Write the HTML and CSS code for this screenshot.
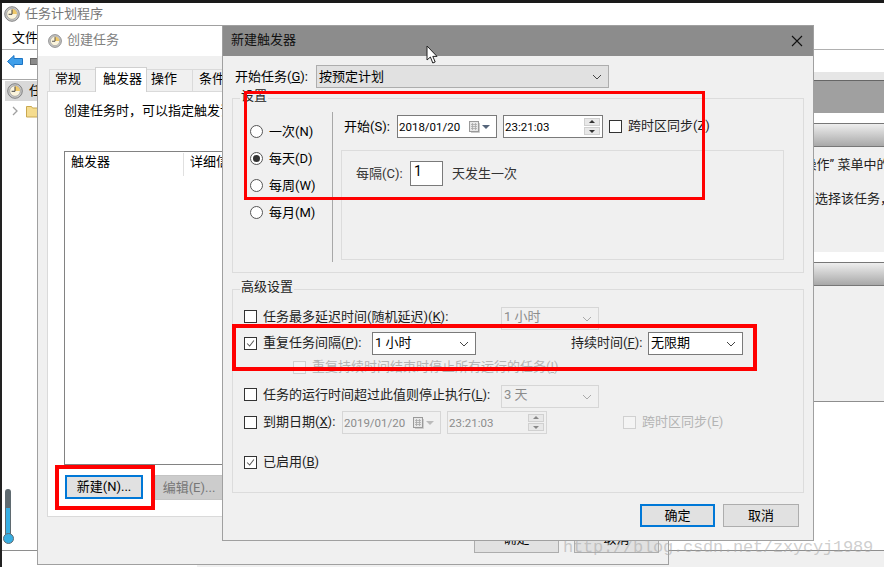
FILE: index.html
```html
<!DOCTYPE html>
<html lang="zh-CN">
<head>
<meta charset="utf-8">
<title>新建触发器</title>
<link rel="stylesheet" href="styles.css">
</head>
<body>
<svg class="defs" width="0" height="0" aria-hidden="true">
  <symbol id="clock" viewBox="0 0 16 16">
    <circle cx="8" cy="8" r="7.3" fill="#c9c9c9" stroke="#777" stroke-width="0.9"/>
    <circle cx="8" cy="8" r="5.3" fill="#fbf4dc" stroke="#8a8a8a" stroke-width="0.6"/>
    <path d="M8 8V3a5 5 0 0 1 5 5z" fill="#f0c96a"/>
    <path d="M8 3.6V8.3H4.6" fill="none" stroke="#444" stroke-width="1"/>
  </symbol>
  <symbol id="chev" viewBox="0 0 10 6">
    <path d="M1 1l4 4 4-4" fill="none" stroke="currentColor" stroke-width="1"/>
  </symbol>
  <symbol id="tick" viewBox="0 0 13 13">
    <path d="M2.5 6.5l3 3 5-6.5" fill="none" stroke="#555" stroke-width="1.2"/>
  </symbol>
  <symbol id="cal" viewBox="0 0 11 12">
    <rect x="0.5" y="0.5" width="9" height="10" fill="#e8e8e8" stroke="#9a9a9a"/>
    <path d="M2 3.5h6M2 5.5h6M2 7.5h6M3.5 2v7M6.5 2v7" stroke="#a8a8a8" stroke-width="0.8"/>
    <path d="M10.5 2v9.5H2" fill="none" stroke="#ccc"/>
  </symbol>
</svg>

<div class="screen">
  <div class="topbar"></div>
  <div class="desk">
    <div class="edge"></div>
    <div class="main">
      <div class="main-title"><svg class="ico16"><use href="#clock"/></svg><span>任务计划程序</span></div>
      <div class="main-menu">文件</div>
      <div class="main-tools">
        <svg class="back" viewBox="0 0 16 13"><path d="M0.5 6.5L7 0.5v3h8.5v6H7v3z" fill="#3f9fea" stroke="#1c74c4"/></svg>
        <span class="tool-box"></span>
      </div>
      <div class="main-content">
        <div class="tree">
          <div class="tree-sel"><svg class="ico16"><use href="#clock"/></svg><span>任</span></div>
          <div class="tree-row">
            <svg class="chev-r" viewBox="0 0 6 10"><path d="M1 1l4 4-4 4" fill="none" stroke="#a0a0a0" stroke-width="1.3"/></svg>
            <svg class="folder" viewBox="0 0 14 14"><path d="M0.5 2.5h5l1 1.5h7v9h-13z" fill="#f5dc8f" stroke="#c9a850"/></svg>
          </div>
        </div>
        <div class="pane">
          <div class="pane-blank"></div>
          <div class="pane-head"></div>
          <div class="pane-gap"></div>
          <div class="band"></div>
          <div class="pane-text">
            <p class="ln1">“操作” 菜单中的选项</p>
            <p class="ln2">中选择该任务，然后</p>
          </div>
          <div class="pane-gap"></div>
          <div class="band"></div>
          <div class="pane-fill"></div>
          <div class="pane-white"></div>
        </div>
      </div>
    </div>
    <div class="main-foot"></div>
  </div>

  <div class="thermo">
    <span class="thermo-tube"><span class="thermo-level"></span></span>
    <span class="thermo-bulb"></span>
  </div>

  <!-- 创建任务 window -->
  <section class="win create">
    <header class="create-title"><svg class="ico16"><use href="#clock"/></svg><span>创建任务</span></header>
    <div class="create-body">
      <nav class="tabs">
        <span class="tab t-a">常规</span>
        <span class="tab t-on">触发器</span>
        <span class="tab t-b">操作</span>
        <span class="tab t-c">条件</span>
      </nav>
      <div class="tab-panel">
        <p class="hint">创建任务时，可以指定触发该任务的条件。</p>
        <div class="list">
          <div class="list-head"><span class="col-a">触发器</span><span class="col-b">详细信息</span></div>
        </div>
        <div class="list-btns">
          <span class="btn btn-new">新建(N)...</span>
          <span class="btn btn-edit">编辑(E)...</span>
        </div>
      </div>
      <div class="create-foot">
        <span class="btn btn-back">确定</span>
        <span class="btn btn-back">取消</span>
      </div>
    </div>
  </section>

  <!-- 新建触发器 window -->
  <section class="win trigger">
    <header class="trig-title">
      <span>新建触发器</span>
      <svg class="close" viewBox="0 0 12 12"><path d="M1 1l10 10M11 1L1 11" stroke="#111" stroke-width="1.1"/></svg>
    </header>
    <div class="trig-body">
      <div class="begin">
        <span class="begin-lab">开始任务(<u>G</u>):</span>
        <span class="combo combo-fill w-begin"><span>按预定计划</span><svg class="chev"><use href="#chev"/></svg></span>
      </div>

      <div class="group g1">
        <span class="legend">设置</span>
        <div class="g1-inner">
          <div class="radios">
            <label class="radio"><i class="dot"></i><span>一次(N)</span></label>
            <label class="radio"><i class="dot dot-on"></i><span>每天(D)</span></label>
            <label class="radio"><i class="dot"></i><span>每周(W)</span></label>
            <label class="radio"><i class="dot"></i><span>每月(M)</span></label>
          </div>
          <div class="sched">
            <div class="sched-top">
              <span class="start-lab">开始(S):</span>
              <span class="field w-date"><span>2018/01/20</span><svg class="cal"><use href="#cal"/></svg><i class="tri"></i></span>
              <span class="field w-time"><span>23:21:03</span><span class="spin"><i class="up"></i><i class="down"></i></span></span>
              <span class="check"></span>
              <span class="tz">跨时区同步(Z)</span>
            </div>
            <div class="every-box">
              <span class="every-lab">每隔(C):</span>
              <span class="num">1</span>
              <span class="every-txt">天发生一次</span>
            </div>
          </div>
        </div>
      </div>

      <div class="group g2">
        <span class="legend">高级设置</span>
        <div class="row r1">
          <span class="check"></span>
          <span class="lab w-l1">任务最多延迟时间(随机延迟)(<u>K</u>):</span>
          <span class="combo combo-off w-dis"><span>1 小时</span><svg class="chev"><use href="#chev"/></svg></span>
        </div>
        <div class="row r2">
          <span class="check"><svg><use href="#tick"/></svg></span>
          <span class="lab w-l2">重复任务间隔(<u>P</u>):</span>
          <span class="combo w-rep"><span>1 小时</span><svg class="chev"><use href="#chev"/></svg></span>
          <span class="lab w-l3">持续时间(<u>F</u>):</span>
          <span class="combo w-dur"><span>无限期</span><svg class="chev"><use href="#chev"/></svg></span>
        </div>
        <div class="row r3">
          <span class="check check-off"></span>
          <span class="lab off">重复持续时间结束时停止所有运行的任务(<u>I</u>)</span>
        </div>
        <div class="row r4">
          <span class="check"></span>
          <span class="lab w-l1">任务的运行时间超过此值则停止执行(<u>L</u>):</span>
          <span class="combo combo-off w-dis"><span>3 天</span><svg class="chev"><use href="#chev"/></svg></span>
        </div>
        <div class="row r5">
          <span class="check"></span>
          <span class="lab w-l4">到期日期(<u>X</u>):</span>
          <span class="field field-off w-date2"><span>2019/01/20</span><svg class="cal"><use href="#cal"/></svg><i class="tri"></i></span>
          <span class="field field-off w-time2"><span>23:21:03</span><span class="spin"><i class="up"></i><i class="down"></i></span></span>
          <span class="check check-off cb-tz2"></span>
          <span class="lab off">跨时区同步(E)</span>
        </div>
        <div class="row r6">
          <span class="check"><svg><use href="#tick"/></svg></span>
          <span class="lab">已启用(<u>B</u>)</span>
        </div>
      </div>

      <div class="actions">
        <span class="btn btn-ok">确定</span>
        <span class="btn btn-cancel">取消</span>
      </div>
    </div>
  </section>

  <div class="mark mark-a"></div>
  <div class="mark mark-b"></div>
  <div class="mark mark-c"></div>

  <svg class="cursor" viewBox="0 0 13 19"><path d="M1 1v14l3.4-3 2.4 6 2.4-1-2.4-5.6H11z" fill="#fff" stroke="#222" stroke-width="1"/></svg>
  <div class="watermark">http://blog.csdn.net/zxycyj1989</div>
</div>
</body>
</html>
```

FILE: styles.css
```css
* { box-sizing: border-box; }
html, body { margin: 0; padding: 0; }
body {
  width: 884px;
  height: 567px;
  overflow: hidden;
  background: #fff;
  color: #000;
  font-family: Roboto, "Noto Sans CJK SC", sans-serif;
  font-size: 13px;
  line-height: 18px;
}
p { margin: 0; }
u { text-decoration: underline; }
i { display: block; font-style: normal; }
.defs { position: absolute; }
.screen { position: relative; width: 884px; height: 567px; overflow: hidden; }
.topbar { height: 3px; background: #1a1a1a; }
.desk { position: relative; height: 564px; padding-left: 2px; }
.edge { position: absolute; left: 0; top: 0; bottom: 0; width: 2px; background: #222; }
.ico16 { width: 16px; height: 16px; flex: none; }

/* main window behind */
.main { height: 548px; border-bottom: 1px solid #8e8e8e; background: #fff; overflow: hidden; display: flex; flex-direction: column; }
.main-foot { height: 16px; margin-left: 195px; background: #f0f0f0; }
.main-title { height: 22px; flex: none; display: flex; align-items: center; gap: 5px; padding-left: 2px; color: #777; }
.main-menu { height: 25px; flex: none; padding: 4px 0 0 10px; border-bottom: 1px solid #b0b0b0; }
.main-tools { height: 22px; flex: none; display: flex; align-items: center; gap: 7px; padding-left: 5px; }
.back { width: 16px; height: 13px; }
.tool-box { width: 10px; height: 7px; background: #8a8a8a; border: 1px solid #666; }
.main-content { flex: 1; display: flex; min-height: 0; }
.tree { width: 190px; margin-top: 7px; padding: 1px 0 0 3px; border-top: 1px solid #a8a8a8; }
.tree-sel { height: 20px; background: #d9d9d9; display: flex; align-items: center; gap: 6px; padding-left: 2px; }
.tree-row { display: flex; align-items: center; gap: 8px; padding: 3px 0 0 7px; }
.chev-r { width: 6px; height: 10px; }
.folder { width: 14px; height: 14px; }
.pane { flex: 1; min-width: 0; overflow: hidden; display: flex; flex-direction: column; }
.pane-blank { height: 8px; flex: none; background: #e6e6e6; }
.pane-head { height: 33px; flex: none; background: #a0a0a0; border-top: 1px solid #666; }
.pane-gap { height: 10px; flex: none; background: #fff; }
.band { height: 24px; flex: none; border-top: 1px solid #777; border-bottom: 1px solid #777; background: linear-gradient(#eee, #a8a8a8); }
.pane-text { height: 105px; flex: none; background: #f0f0f0; white-space: nowrap; padding-left: 607px; color: #222; }
.ln1 { padding-top: 9px; }
.ln2 { padding-top: 16px; margin-left: 3px; }
.pane-fill { height: 116px; flex: none; background: #f0f0f0; border-bottom: 1px solid #8e8e8e; }
.pane-white { flex: 1; background: #fff; }

.thermo { position: absolute; left: 3px; top: 489px; width: 11px; height: 55px; }
.thermo-tube { display: block; position: relative; width: 6px; height: 48px; margin-left: 2px; background: #5f6a70; border-radius: 3px 3px 0 0; }
.thermo-level { position: absolute; left: 1px; right: 1px; top: 19px; bottom: 0; background: #37aee2; }
.thermo-bulb { display: block; width: 11px; height: 11px; margin-top: -4px; border-radius: 50%; background: #37aee2; border: 1px solid #5f6a70; position: relative; }

/* windows on the desktop */
.win { position: absolute; background: #f0f0f0; border: 1px solid #a0a0a0; }
.create { left: 37px; top: 25px; width: 632px; height: 540px; display: flex; flex-direction: column; }
.create-title { height: 30px; flex: none; background: #fff; display: flex; align-items: center; gap: 5px; padding-left: 10px; color: #808080; }
.create-title span { padding-bottom: 2px; }
.create-title .ico16 { width: 14px; height: 14px; }
.create-body { flex: 1; padding: 10px 0 0 9px; min-height: 0; }
.tabs { display: flex; height: 25px; align-items: flex-end; position: relative; }
.tab { height: 22px; padding-left: 6px; background: #f0f0f0; border: 1px solid #dadada; border-bottom: 0; margin-left: -1px; }
.t-a { width: 47px; margin-left: 2px; padding-left: 5px; }
.t-b { width: 47px; padding-left: 4px; }
.t-c { width: 47px; }
.t-on { width: 52px; height: 25px; background: #fff; position: relative; z-index: 1; margin-bottom: -1px; padding: 2px 0 0 7px; border-color: #d0d0d0; }
.tab-panel { width: 621px; height: 426px; background: #fff; border: 1px solid #dadada; padding: 10px 0 0 16px; }
.hint { height: 49px; white-space: nowrap; }
.list { width: 540px; height: 314px; border: 1px solid #828282; }
.list-head { display: flex; height: 24px; padding-top: 1px; }
.col-a { width: 119px; padding-left: 6px; border-right: 1px solid #e0e0e0; }
.col-b { padding-left: 6px; white-space: nowrap; }
.list-btns { display: flex; gap: 12px; padding: 10px 0 0 1px; }
.btn { display: flex; align-items: center; justify-content: center; height: 23px; background: #e1e1e1; border: 1px solid #adadad; }
.btn-new { width: 78px; height: 24px; border: 2px solid #0078d7; }
.btn-edit { width: 68px; height: 25px; background: #cccccc; border-color: #c4c4c4; color: #777; }
.create-foot { display: flex; padding: 14px 0 0 427px; gap: 15px; }
.btn-back { width: 85px; height: 22px; padding-bottom: 6px; }

/* trigger dialog */
.trigger { left: 222px; top: 25px; width: 592px; height: 516px; display: flex; flex-direction: column; z-index: 2; }
.trig-title { height: 30px; flex: none; background: #8c8c8c; display: flex; align-items: center; justify-content: space-between; padding: 0 10px 0 8px; color: #111; }
.trig-title span { padding-bottom: 2px; }
.close { width: 12px; height: 12px; }
.trig-body { flex: 1; padding: 9px 9px 0 9px; min-height: 0; }
.begin { display: flex; align-items: center; height: 23px; padding-left: 3px; }
.begin-lab { width: 81px; }
.w-begin { width: 293px; }
.combo { display: flex; align-items: center; justify-content: space-between; height: 23px; flex: none; padding: 0 6px 0 2px; background: #fff; border: 1px solid #7a7a7a; }
.combo > span { padding-bottom: 2px; }
.combo-fill { background: #e1e1e1; border-color: #adadad; }
.combo-fill > span { padding-bottom: 0; }
.combo-off { background: #f0f0f0; border-color: #d6d6d6; color: #8c8c8c; }
.combo-off > span { padding-bottom: 4px; }
.chev { width: 10px; height: 6px; color: #444; flex: none; }
.combo-off .chev { color: #aaa; }

.group { position: relative; width: 572px; border: 1px solid #dcdcdc; }
.legend { position: absolute; left: 7px; top: -12px; padding: 0 1px; background: #f0f0f0; color: #222; }
.g1 { margin-top: 10px; height: 175px; padding: 13px 0 0 17px; }
.g1-inner { display: flex; }
.radios { width: 83px; height: 150px; padding-top: 6px; border-right: 1px solid #a8a8a8; }
.radio { display: flex; align-items: center; gap: 6px; height: 27px; }
.dot { width: 13px; height: 13px; border-radius: 50%; border: 1px solid #555; background: #fff; flex: none; display: flex; align-items: center; justify-content: center; }
.dot-on::after { content: ""; width: 7px; height: 7px; border-radius: 50%; background: #333; }
.sched { padding: 3px 0 0 8px; }
.sched-top { display: flex; align-items: center; height: 23px; }
.start-lab { width: 56px; padding-left: 3px; }
.field { display: flex; align-items: center; height: 23px; flex: none; padding: 0 2px 0 1px; background: #fff; border: 1px solid #7a7a7a; font-size: 11.5px; position: relative; }
.field-off { background: #f0f0f0; border-color: #d6d6d6; color: #8c8c8c; }
.w-date { width: 100px; padding-right: 6px; }
.w-time { width: 100px; margin: 0 6px; justify-content: space-between; }
.cal { width: 11px; height: 12px; margin-left: auto; flex: none; }
.tri { width: 0; height: 0; margin-left: 2px; border-left: 4px solid transparent; border-right: 4px solid transparent; border-top: 4px solid #55657a; }
.field-off .tri { border-top-color: #bbb; }
.spin { display: flex; flex-direction: column; gap: 1px; width: 16px; }
.up, .down { height: 8px; background: #e8e8e8; border: 1px solid #d0d0d0; position: relative; }
.up::after, .down::after { content: ""; position: absolute; left: 4px; border-left: 3px solid transparent; border-right: 3px solid transparent; }
.up::after { top: 1px; border-bottom: 3px solid #333; }
.down::after { top: 2px; border-top: 3px solid #333; }
.field-off .up::after { border-bottom-color: #888; }
.field-off .down::after { border-top-color: #888; }
.check { width: 13px; height: 13px; flex: none; border: 1px solid #333; background: #fff; display: block; }
.check svg { display: block; width: 11px; height: 11px; }
.check-off { border-color: #d0d0d0; background: #f4f4f4; }
.tz { margin-left: 6px; white-space: nowrap; color: #222; padding-bottom: 1px; }
.every-box { width: 443px; height: 110px; margin-top: 12px; border: 1px solid #dcdcdc; padding: 10px 0 0 14px; display: flex; align-items: flex-start; }
.every-lab { width: 54px; height: 25px; display: flex; align-items: center; color: #333; }
.num { width: 33px; height: 25px; background: #fff; border: 1px solid #7a7a7a; padding-left: 3px; font-size: 14px; }
.every-txt { margin-left: 9px; height: 25px; display: flex; align-items: center; color: #333; }

.g2 { margin-top: 16px; height: 204px; padding: 17px 0 0 11px; }
.row { display: flex; align-items: center; height: 23px; white-space: nowrap; }
.row .check + .lab { margin-left: 6px; }
.lab { color: #222; display: block; flex: none; padding-bottom: 2px; }
.off { color: #b4b4b4; }
.r1 .check, .r4 .check { margin-bottom: 4px; }
.r1 .lab, .r4 .lab { padding-bottom: 4px; }
.r2 { margin-top: 2px; }
.r3 { margin-top: 1px; padding-left: 49px; }
.r4 { margin-top: 6px; }
.r5 { margin-top: 3px; }
.r6 { margin-top: 17px; }
.w-l1 { width: 238px; }
.w-l2 { width: 109px; }
.w-l3 { width: 77px; margin-left: 95px; }
.w-l4 { width: 79px; }
.w-dis { width: 98px; }
.w-rep { width: 104px; }
.w-dur { width: 95px; }
.w-date2 { width: 99px; padding-right: 6px; }
.w-time2 { width: 100px; margin-left: 6px; justify-content: space-between; }
.cb-tz2 { margin-left: 76px; }
.actions { display: flex; gap: 8px; padding: 11px 0 0 408px; }
.btn-ok { width: 75px; border: 2px solid #0078d7; }
.btn-cancel { width: 76px; }

/* annotations over everything */
.mark { position: absolute; border: 3px solid #f00; z-index: 3; }
.mark-a { left: 244px; top: 91px; width: 461px; height: 109px; }
.mark-b { left: 232px; top: 324px; width: 525px; height: 47px; border-width: 4px; }
.mark-c { left: 55px; top: 465px; width: 100px; height: 45px; border-width: 4px; }
.cursor { position: absolute; left: 426px; top: 45px; width: 13px; height: 19px; z-index: 4; }
.watermark { position: absolute; left: 563px; top: 538px; z-index: 4; font-family: "Liberation Mono", monospace; font-size: 17px; line-height: 20px; letter-spacing: -0.2px; color: rgba(165,165,165,0.55); white-space: nowrap; }
```
